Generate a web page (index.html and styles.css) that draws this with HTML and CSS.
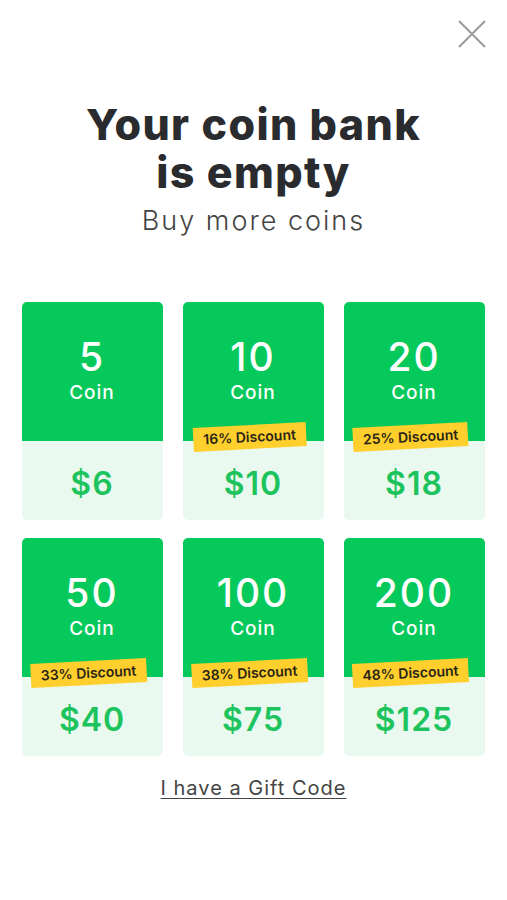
FILE: index.html
```html
<!DOCTYPE html>
<html>
<head>
<meta charset="utf-8">
<link rel="stylesheet" href="styles.css">
</head>
<body>
<div class="page">
  <div class="topbar">
    <button class="close" aria-label="Close">
      <svg width="28" height="28" viewBox="0 0 28 28"><path d="M1 1 L27 27 M27 1 L1 27" stroke="#9a9a9a" stroke-width="2" fill="none"/></svg>
    </button>
  </div>
  <h1 class="title">Your coin bank<br>is empty</h1>
  <p class="subtitle">Buy more coins</p>
  <div class="grid">
    <div class="card"><div class="top"><div class="num">5</div><div class="unit">Coin</div></div><div class="bottom"><div class="price">$6</div></div></div>
    <div class="card"><div class="top"><div class="num">10</div><div class="unit">Coin</div></div><div class="badge">16% Discount</div><div class="bottom"><div class="price">$10</div></div></div>
    <div class="card"><div class="top"><div class="num">20</div><div class="unit">Coin</div></div><div class="badge">25% Discount</div><div class="bottom"><div class="price">$18</div></div></div>
    <div class="card"><div class="top"><div class="num">50</div><div class="unit">Coin</div></div><div class="badge">33% Discount</div><div class="bottom"><div class="price">$40</div></div></div>
    <div class="card"><div class="top"><div class="num">100</div><div class="unit">Coin</div></div><div class="badge">38% Discount</div><div class="bottom"><div class="price">$75</div></div></div>
    <div class="card"><div class="top"><div class="num">200</div><div class="unit">Coin</div></div><div class="badge">48% Discount</div><div class="bottom"><div class="price">$125</div></div></div>
  </div>
  <div class="gift"><a href="#" class="gift-link">I have a Gift Code</a></div>
</div>
</body>
</html>
```
FILE: styles.css
```css
* { box-sizing: border-box; }
html, body { margin: 0; padding: 0; background: #fff; }
body { font-family: Inter, "Open Sans", sans-serif; color: #2a2b2e; }
.page { width: 507px; }
.topbar { display: flex; justify-content: flex-end; padding: 20px 21px 0 0; height: 50px; }
.close { border: 0; background: none; padding: 0; width: 28px; height: 28px; cursor: pointer; }
.close svg { display: block; }
.title { margin: 50px 0 0; text-align: center; font-size: 43px; line-height: 48px; font-weight: 800; letter-spacing: 1.4px; color: #2a2b2e; }
.subtitle { margin: 8px 0 0; text-align: center; font-size: 27px; line-height: 34px; font-weight: 300; letter-spacing: 2px; color: #444; }
.grid { display: grid; grid-template-columns: repeat(3, 141px); column-gap: 20px; row-gap: 18px; justify-content: center; margin-top: 64px; padding-right: 1px; }
.card { position: relative; height: 218px; border-radius: 5px; overflow: hidden; display: flex; flex-direction: column; }
.top { height: 139px; background: #05c95a; color: #fff; display: flex; flex-direction: column; align-items: center; padding-top: 33px; }
.num { font-size: 39px; line-height: 44px; font-weight: 500; letter-spacing: 2px; }
.unit { font-size: 19px; line-height: 24px; font-weight: 500; margin-top: 2px; letter-spacing: 1px; }
.bottom { flex: 1; background: #eaf9ef; display: flex; justify-content: center; align-items: center; padding-top: 6px; }
.price { font-size: 32px; line-height: 40px; font-weight: 600; color: #1dc35d; letter-spacing: 1px; }
.badge { position: absolute; left: 50%; top: 123px; transform: translateX(-53%) rotate(-3deg); background: #ffcf2d; color: #2b2616; font-size: 14px; font-weight: 600; line-height: 24px; padding: 0 10px; white-space: nowrap; }
.gift { text-align: center; margin-top: 20px; }
.gift-link { font-size: 20px; color: #444; text-decoration: underline; text-underline-offset: 3px; text-decoration-thickness: 1px; font-weight: 400; letter-spacing: 1px; }
```
